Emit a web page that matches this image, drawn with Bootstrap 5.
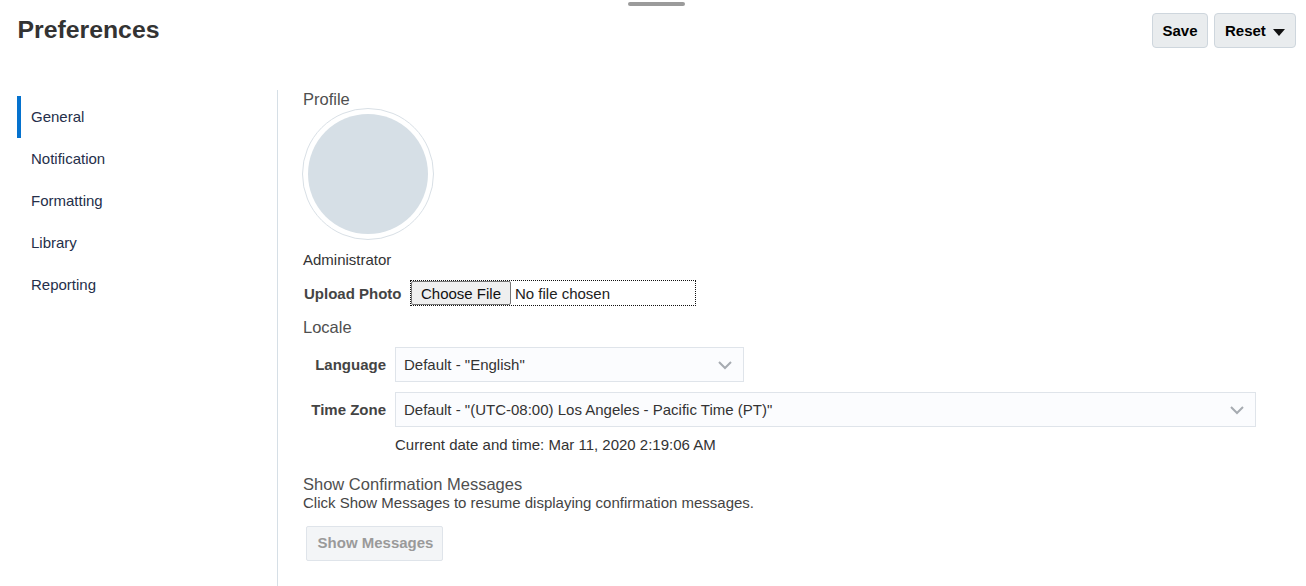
<!DOCTYPE html>
<html lang="en">
<head>
<meta charset="utf-8">
<title>Preferences</title>
<link href="https://cdn.jsdelivr.net/npm/bootstrap@5.3.0/dist/css/bootstrap.min.css" rel="stylesheet">
<style>
html,body{height:586px;overflow:hidden}
body{font-family:"Liberation Sans",Arial,sans-serif;font-size:15px;color:#333;background:#fff;position:relative}
.drag-grip{position:absolute;left:628px;top:2px;width:57px;height:4px;border-radius:2px;background:#9b9b9b}
.pref-head{height:90px;padding:12px 10px 0 17.5px}
.pref-title{font-size:24.8px;line-height:36px;font-weight:700;color:#333;margin:0}
.pref-tools{margin-top:1px;gap:6px}
.tool-btn{height:35px;background:#e9ecee;border:1px solid #ced6dd;border-radius:4px;color:#000;font-size:15px;font-weight:700;padding:0;line-height:33px}
.tool-btn:hover{background:#e9ecee;color:#000}
.btn-save{width:56px}
.btn-reset{width:82px}
.tri{display:inline-block;width:0;height:0;border-left:6.5px solid transparent;border-right:6.5px solid transparent;border-top:7px solid #111;margin-left:3px;vertical-align:0}
.pref-main{height:496px}
.side-nav{width:278px;border-right:1px solid #d6dfe6;padding:6px 0 0 17px;flex:none}
.side-link{display:block;height:42px;line-height:42px;padding-left:14px;color:#252f4a;font-size:15px;text-decoration:none}
.side-link.on{border-left:4px solid #0572ce;padding-left:10px}
.pref-body{padding:0 0 0 25px;flex:1}
.sec-title{font-size:16.5px;line-height:18px;color:#4f4f4f;font-weight:400}
.avatar-ring{width:132px;height:132px;border:1px solid #d9e0e6;border-radius:50%;padding:5px;margin:0 0 0 -1px}
.avatar-fill{width:100%;height:100%;border-radius:50%;background:#d6dfe6}
.admin-name{margin-top:11px;line-height:17px}
.upload-row{margin-top:12px;height:26px;margin-left:1px}
.upload-lbl{font-weight:700;width:106px;color:#444;padding-top:3px}
.file-box{width:286px;height:26px;outline:1px dotted #111;outline-offset:-1px;font-family:"Liberation Sans",Arial,sans-serif;font-size:15px;color:#222;padding:1px;display:block;line-height:normal}
.file-box::file-selector-button{height:24px;width:100px;padding:0;margin:0 4px 0 0;background:#efefef;border:1px solid #767676;border-radius:2px;color:#111;font-size:15px;font-family:inherit}
.locale-title{margin-top:12px}
.field-lbl{width:83px;text-align:right;font-weight:700;color:#444;margin:0 9px 0 0;flex:none;padding-top:1px}
.field-first{margin-top:11px}
.field-next{margin-top:10px}
.pick{height:35px;padding:0 8px;border:1px solid #dfe4ea;border-radius:0;background-color:#fbfcfe;font-size:15px;color:#333;line-height:33px;background-position:right 10px center;background-size:16px 12px;background-image:url("data:image/svg+xml,%3csvg xmlns='http://www.w3.org/2000/svg' viewBox='0 0 16 12'%3e%3cpath fill='none' stroke='%23a6abb1' stroke-width='2' d='M2 3l6 6 6-6'/%3e%3c/svg%3e")}
.pick-a{width:349px}
.pick-b{width:861px}
.now-line{margin:9px 0 0 92px;line-height:18px}
.confirm-title{margin-top:21px}
.confirm-hint{line-height:17px;color:#444;margin-top:1px}
.off-btn{height:35px;width:137px;margin:15px 0 0 3px;padding:0 0 0 2px;background:#f3f5f7;border:1px solid #dfe4ea;border-radius:2px;color:#9a9a9a;font-weight:700;font-size:15px}
</style>
</head>
<body>
<div class="drag-grip"></div>
<header class="pref-head d-flex justify-content-between align-items-start">
  <h1 class="pref-title">Preferences</h1>
  <div class="d-flex pref-tools">
    <button type="button" class="btn tool-btn btn-save">Save</button>
    <button type="button" class="btn tool-btn btn-reset">Reset <span class="tri"></span></button>
  </div>
</header>
<main class="pref-main d-flex">
  <nav class="side-nav">
    <a class="side-link on" href="#">General</a>
    <a class="side-link" href="#">Notification</a>
    <a class="side-link" href="#">Formatting</a>
    <a class="side-link" href="#">Library</a>
    <a class="side-link" href="#">Reporting</a>
  </nav>
  <section class="pref-body">
    <div class="sec-title">Profile</div>
    <div class="avatar-ring"><div class="avatar-fill"></div></div>
    <div class="admin-name">Administrator</div>
    <div class="upload-row d-flex align-items-center">
      <label class="upload-lbl" for="photo">Upload Photo</label>
      <input class="file-box" type="file" id="photo">
    </div>
    <div class="sec-title locale-title">Locale</div>
    <div class="d-flex align-items-center field-first">
      <label class="field-lbl" for="lang">Language</label>
      <select class="form-select pick pick-a" id="lang"><option>Default - "English"</option></select>
    </div>
    <div class="d-flex align-items-center field-next">
      <label class="field-lbl" for="tz">Time Zone</label>
      <select class="form-select pick pick-b" id="tz"><option>Default - "(UTC-08:00) Los Angeles - Pacific Time (PT)"</option></select>
    </div>
    <div class="now-line">Current date and time: Mar 11, 2020 2:19:06 AM</div>
    <div class="sec-title confirm-title">Show Confirmation Messages</div>
    <div class="confirm-hint">Click Show Messages to resume displaying confirmation messages.</div>
    <button type="button" class="btn off-btn">Show Messages</button>
  </section>
</main>
</body>
</html>
